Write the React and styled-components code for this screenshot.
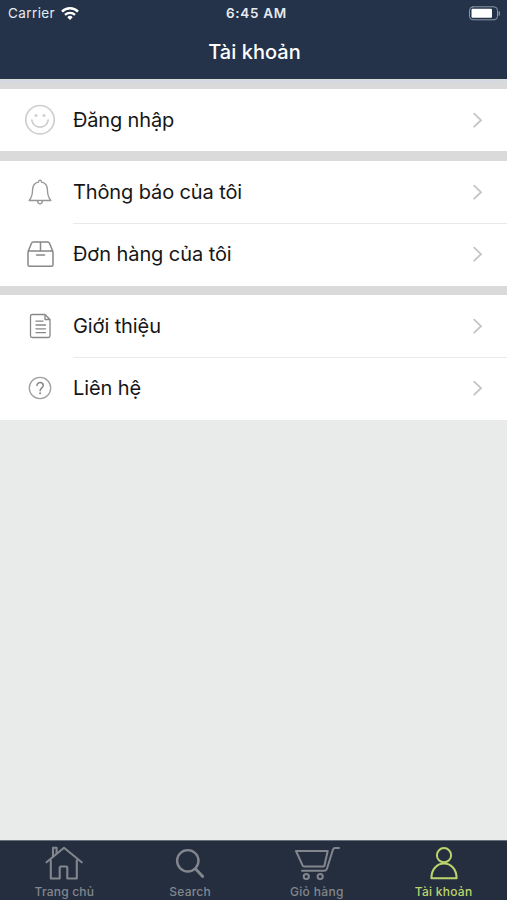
import React from 'react';
import styled, { createGlobalStyle } from 'styled-components';

const GlobalStyle = createGlobalStyle`
    * {
        box-sizing: border-box;
    }

    body {
        margin: 0;
        font-family: Inter, "Liberation Sans", sans-serif;
        -webkit-font-smoothing: antialiased;
    }
`;

const Screen = styled.div`
    display: flex;
    flex-direction: column;
    width: 507px;
    height: 900px;
    overflow: hidden;
    background-color: #e8ebea;
`;

const Header = styled.header`
    height: 79px;
    flex-shrink: 0;
    background-color: #243349;
    border-bottom: 1px solid #26343f;
    color: #fff;
`;

const StatusBar = styled.div`
    display: grid;
    grid-template-columns: 1fr auto 1fr;
    align-items: center;
    height: 27px;
    padding: 0 7px 0 8px;
    font-size: 13.5px;
    line-height: 27px;
    color: #e6ebf2;
`;

const Carrier = styled.div`
    display: flex;
    align-items: center;
    gap: 6px;
    letter-spacing: 0.4px;
`;

const Clock = styled.div`
    font-weight: 600;
    letter-spacing: 0.7px;
    font-size: 13.5px;
    padding-left: 5px;
`;

const Battery = styled.div`
    display: flex;
    justify-content: flex-end;
`;

const Title = styled.h1`
    margin: 0;
    padding-left: 2px;
    font-size: 20px;
    font-weight: 500;
    line-height: 50px;
    letter-spacing: 0.05px;
    text-align: center;
`;

const Section = styled.section`
    flex-shrink: 0;
    background-color: #fff;
    border-top: ${(props) => props.$gap}px solid #dadada;
`;

const HeaderShade = styled.div`
    height: 4px;
    flex-shrink: 0;
    background-color: #d5dae1;
`;

const Row = styled.div`
    display: flex;
    align-items: center;
    height: ${(props) => (props.$divided ? 63 : 62)}px;
    padding-left: 24px;
    padding-bottom: ${(props) => (props.$last ? 2 : 0)}px;
`;

const RowIcon = styled.div`
    display: flex;
    width: 32px;
    margin-right: 17px;
    margin-bottom: ${(props) => (props.$divided ? 1 : 0)}px;
    flex-shrink: 0;
`;

const RowBody = styled.div`
    display: flex;
    align-items: center;
    justify-content: space-between;
    flex: 1;
    height: 100%;
    padding-right: 23px;
    border-bottom: ${(props) => (props.$divided ? "1px solid #e9e9e9" : "none")};
`;

const Label = styled.span`
    font-size: 20px;
    letter-spacing: ${(props) => props.$spacing || 0}px;
    color: #161616;
`;

const TabBar = styled.nav`
    display: grid;
    grid-template-columns: repeat(4, 1fr);
    height: 60px;
    margin-top: auto;
    flex-shrink: 0;
    background-color: #242e3f;
    border-top: 1px solid #66707a;
`;

const Tab = styled.div`
    display: flex;
    flex-direction: column;
    align-items: center;
    padding-top: 4px;
    padding-left: ${(props) => props.$shift || 0}px;
    color: ${(props) => (props.$active ? "#bdd46c" : "#83868d")};
`;

const TabLabel = styled.span`
    margin-top: 2px;
    font-size: 12px;
    font-weight: 500;
    line-height: 18px;
    letter-spacing: ${(props) => props.$spacing}px;
    white-space: nowrap;
`;

const Icon = ({ size = 32, height, color = "#959595", stroke = 1.3, children }) => (
    <svg
        width={size}
        height={height || size}
        viewBox={`0 0 ${size} ${height || size}`}
        fill="none"
        stroke={color}
        strokeWidth={stroke}
        strokeLinejoin="round"
        strokeLinecap="round"
    >
        {children}
    </svg>
);

const WifiIcon = () => (
    <Icon size={18} height={14} color="#fff" stroke={2.3}>
        <path d="M1 4.6A11.2 11.2 0 0 1 17 4.6M4 7.9A7 7 0 0 1 14 7.9" strokeLinecap="butt" />
        <path d="M9 13 6.3 10.2A3.8 3.8 0 0 1 11.7 10.2Z" fill="#fff" stroke="none" />
    </Icon>
);

const BatteryIcon = () => (
    <Icon size={32} height={15} color="#8e98a6" stroke={1}>
        <rect x="1.5" y="0.8" width="28" height="13" rx="3.5" />
        <rect x="3.5" y="2.8" width="20.5" height="9" rx="1" fill="#fff" stroke="none" />
        <path d="M31.2 6v3" strokeWidth="1.3" />
    </Icon>
);

const SmileIcon = () => (
    <Icon color="#cfcfcf" stroke={1.7}>
        <circle cx="16" cy="15.7" r="14.2" />
        <path d="M7.8 16C9.5 25.5 22.5 25.5 24.2 16" />
        <circle cx="12" cy="11.5" r="1.5" fill="#cfcfcf" stroke="none" />
        <circle cx="20" cy="11.5" r="1.5" fill="#cfcfcf" stroke="none" />
    </Icon>
);

const BellIcon = () => (
    <Icon>
        <path d="M14.5 6.2C14.5 3.5 17.5 3.5 17.5 6.2C22 7 23.5 10.5 23.5 14.5C23.5 20 25 22.2 26.8 24.5H5.2C7 22.2 8.5 20 8.5 14.5C8.5 10.5 10 7 14.5 6.2Z" />
        <path d="M13.6 25.3C14 28.6 18 28.6 18.4 25.3" />
    </Icon>
);

const BoxIcon = () => (
    <Icon color="#888" stroke={1.5}>
        <rect x="4" y="13" width="25" height="15.2" rx="1.5" />
        <path d="M4.3 13 7.5 5.3Q8 4 9.3 4H23.7Q25 4 25.5 5.3L28.7 13M16.5 4V12.5M12.5 17H20.5" />
    </Icon>
);

const DocumentIcon = () => (
    <Icon color="#888">
        <path d="M21 4.5H8.2Q6.5 4.5 6.5 6.2V25.8Q6.5 27.5 8.2 27.5H24.3Q26 27.5 26 25.8V9.5ZM21 4.5V9.5H26" />
        <path d="M12 11.2H19M12 15H21.5M12 18.8H21.5M12 22.6H21.5" />
    </Icon>
);

const HelpIcon = () => (
    <Icon color="#a0a0a0">
        <circle cx="16" cy="16" r="10.7" />
        <path d="M13 13.5C13 9.5 19.2 9.7 19.2 13.4C19.2 16 16.1 15.7 16.1 18.8" stroke="#888" strokeWidth="1.5" />
        <circle cx="16.1" cy="21.3" r="1" fill="#888" stroke="none" />
    </Icon>
);

const ChevronIcon = () => (
    <Icon size={12} height={18} color="#c4c4c6" stroke={1.8}>
        <path d="M2.2 2.7 9 9.2 2.2 15.7" strokeLinejoin="miter" />
    </Icon>
);

const HomeIcon = () => (
    <Icon size={40} height={36} color="currentColor" stroke={2.1}>
        <path d="M2.5 17.3 20 2.8 37.7 17.3" />
        <path d="M6.8 15.2V33.5H15.7V22.5Q15.7 21.5 16.9 21.5H22.1Q23.3 21.5 23.3 22.5V33.5H32.8V15.2" />
        <path d="M9 12V2.8H12.6V8.5" />
    </Icon>
);

const SearchIcon = () => (
    <Icon size={40} height={36} color="currentColor" stroke={2.4}>
        <circle cx="17.8" cy="15.8" r="10.7" />
        <path d="M25.7 24 32.7 31.5" strokeWidth="2.9" />
    </Icon>
);

const CartIcon = () => (
    <Icon size={46} height={36} color="currentColor" stroke={2}>
        <path d="M2 6H33.7L30.4 20.7Q30.2 21.5 29.2 21.5H10Q9 21.5 8.7 20.7Z" />
        <path d="M45 3H41Q39.5 3 39 4.5L33 23.5Q32.2 25.8 30.2 25.8H8" />
        <circle cx="12.3" cy="31.5" r="2.6" />
        <circle cx="26.2" cy="31.5" r="2.6" />
    </Icon>
);

const UserIcon = () => (
    <Icon size={40} height={36} color="currentColor" stroke={2}>
        <circle cx="20" cy="10.2" r="7.1" />
        <path d="M7.4 33.2C7.4 13.7 32.6 13.7 32.6 33.2Z" />
    </Icon>
);

const sections = [
    {
        gap: 6,
        rows: [{ label: "Đăng nhập", icon: <SmileIcon />, spacing: -0.15 }],
    },
    {
        gap: 10,
        rows: [
            { label: "Thông báo của tôi", icon: <BellIcon />, spacing: -0.12 },
            { label: "Đơn hàng của tôi", icon: <BoxIcon />, spacing: -0.08 },
        ],
    },
    {
        gap: 9,
        rows: [
            { label: "Giới thiệu", icon: <DocumentIcon />, spacing: -0.1 },
            { label: "Liên hệ", icon: <HelpIcon />, spacing: -0.1 },
        ],
    },
];

const tabs = [
    { label: "Trang chủ", icon: <HomeIcon />, spacing: 0.2, shift: 2 },
    { label: "Search", icon: <SearchIcon />, spacing: 0.25 },
    { label: "Giỏ hàng", icon: <CartIcon />, spacing: 0.35 },
    { label: "Tài khoản", icon: <UserIcon />, spacing: 0.25 },
];

const App = () => {
    const activeTab = "Tài khoản";

    return (
        <Screen>
            <GlobalStyle />
            <Header>
                <StatusBar>
                    <Carrier>
                        Carrier
                        <WifiIcon />
                    </Carrier>
                    <Clock>6:45 AM</Clock>
                    <Battery>
                        <BatteryIcon />
                    </Battery>
                </StatusBar>
                <Title>Tài khoản</Title>
            </Header>
            <HeaderShade />
            {sections.map((section, i) => (
                <Section key={i} $gap={section.gap}>
                    {section.rows.map((row, j) => {
                        const divided = j < section.rows.length - 1;
                        return (
                            <Row key={row.label} $divided={divided} $last={j > 0}>
                                <RowIcon $divided={divided}>{row.icon}</RowIcon>
                                <RowBody $divided={divided}>
                                    <Label $spacing={row.spacing}>{row.label}</Label>
                                    <ChevronIcon />
                                </RowBody>
                            </Row>
                        );
                    })}
                </Section>
            ))}
            <TabBar>
                {tabs.map((tab) => (
                    <Tab key={tab.label} $active={tab.label === activeTab} $shift={tab.shift}>
                        {tab.icon}
                        <TabLabel $spacing={tab.spacing}>{tab.label}</TabLabel>
                    </Tab>
                ))}
            </TabBar>
        </Screen>
    );
};

export default App;
